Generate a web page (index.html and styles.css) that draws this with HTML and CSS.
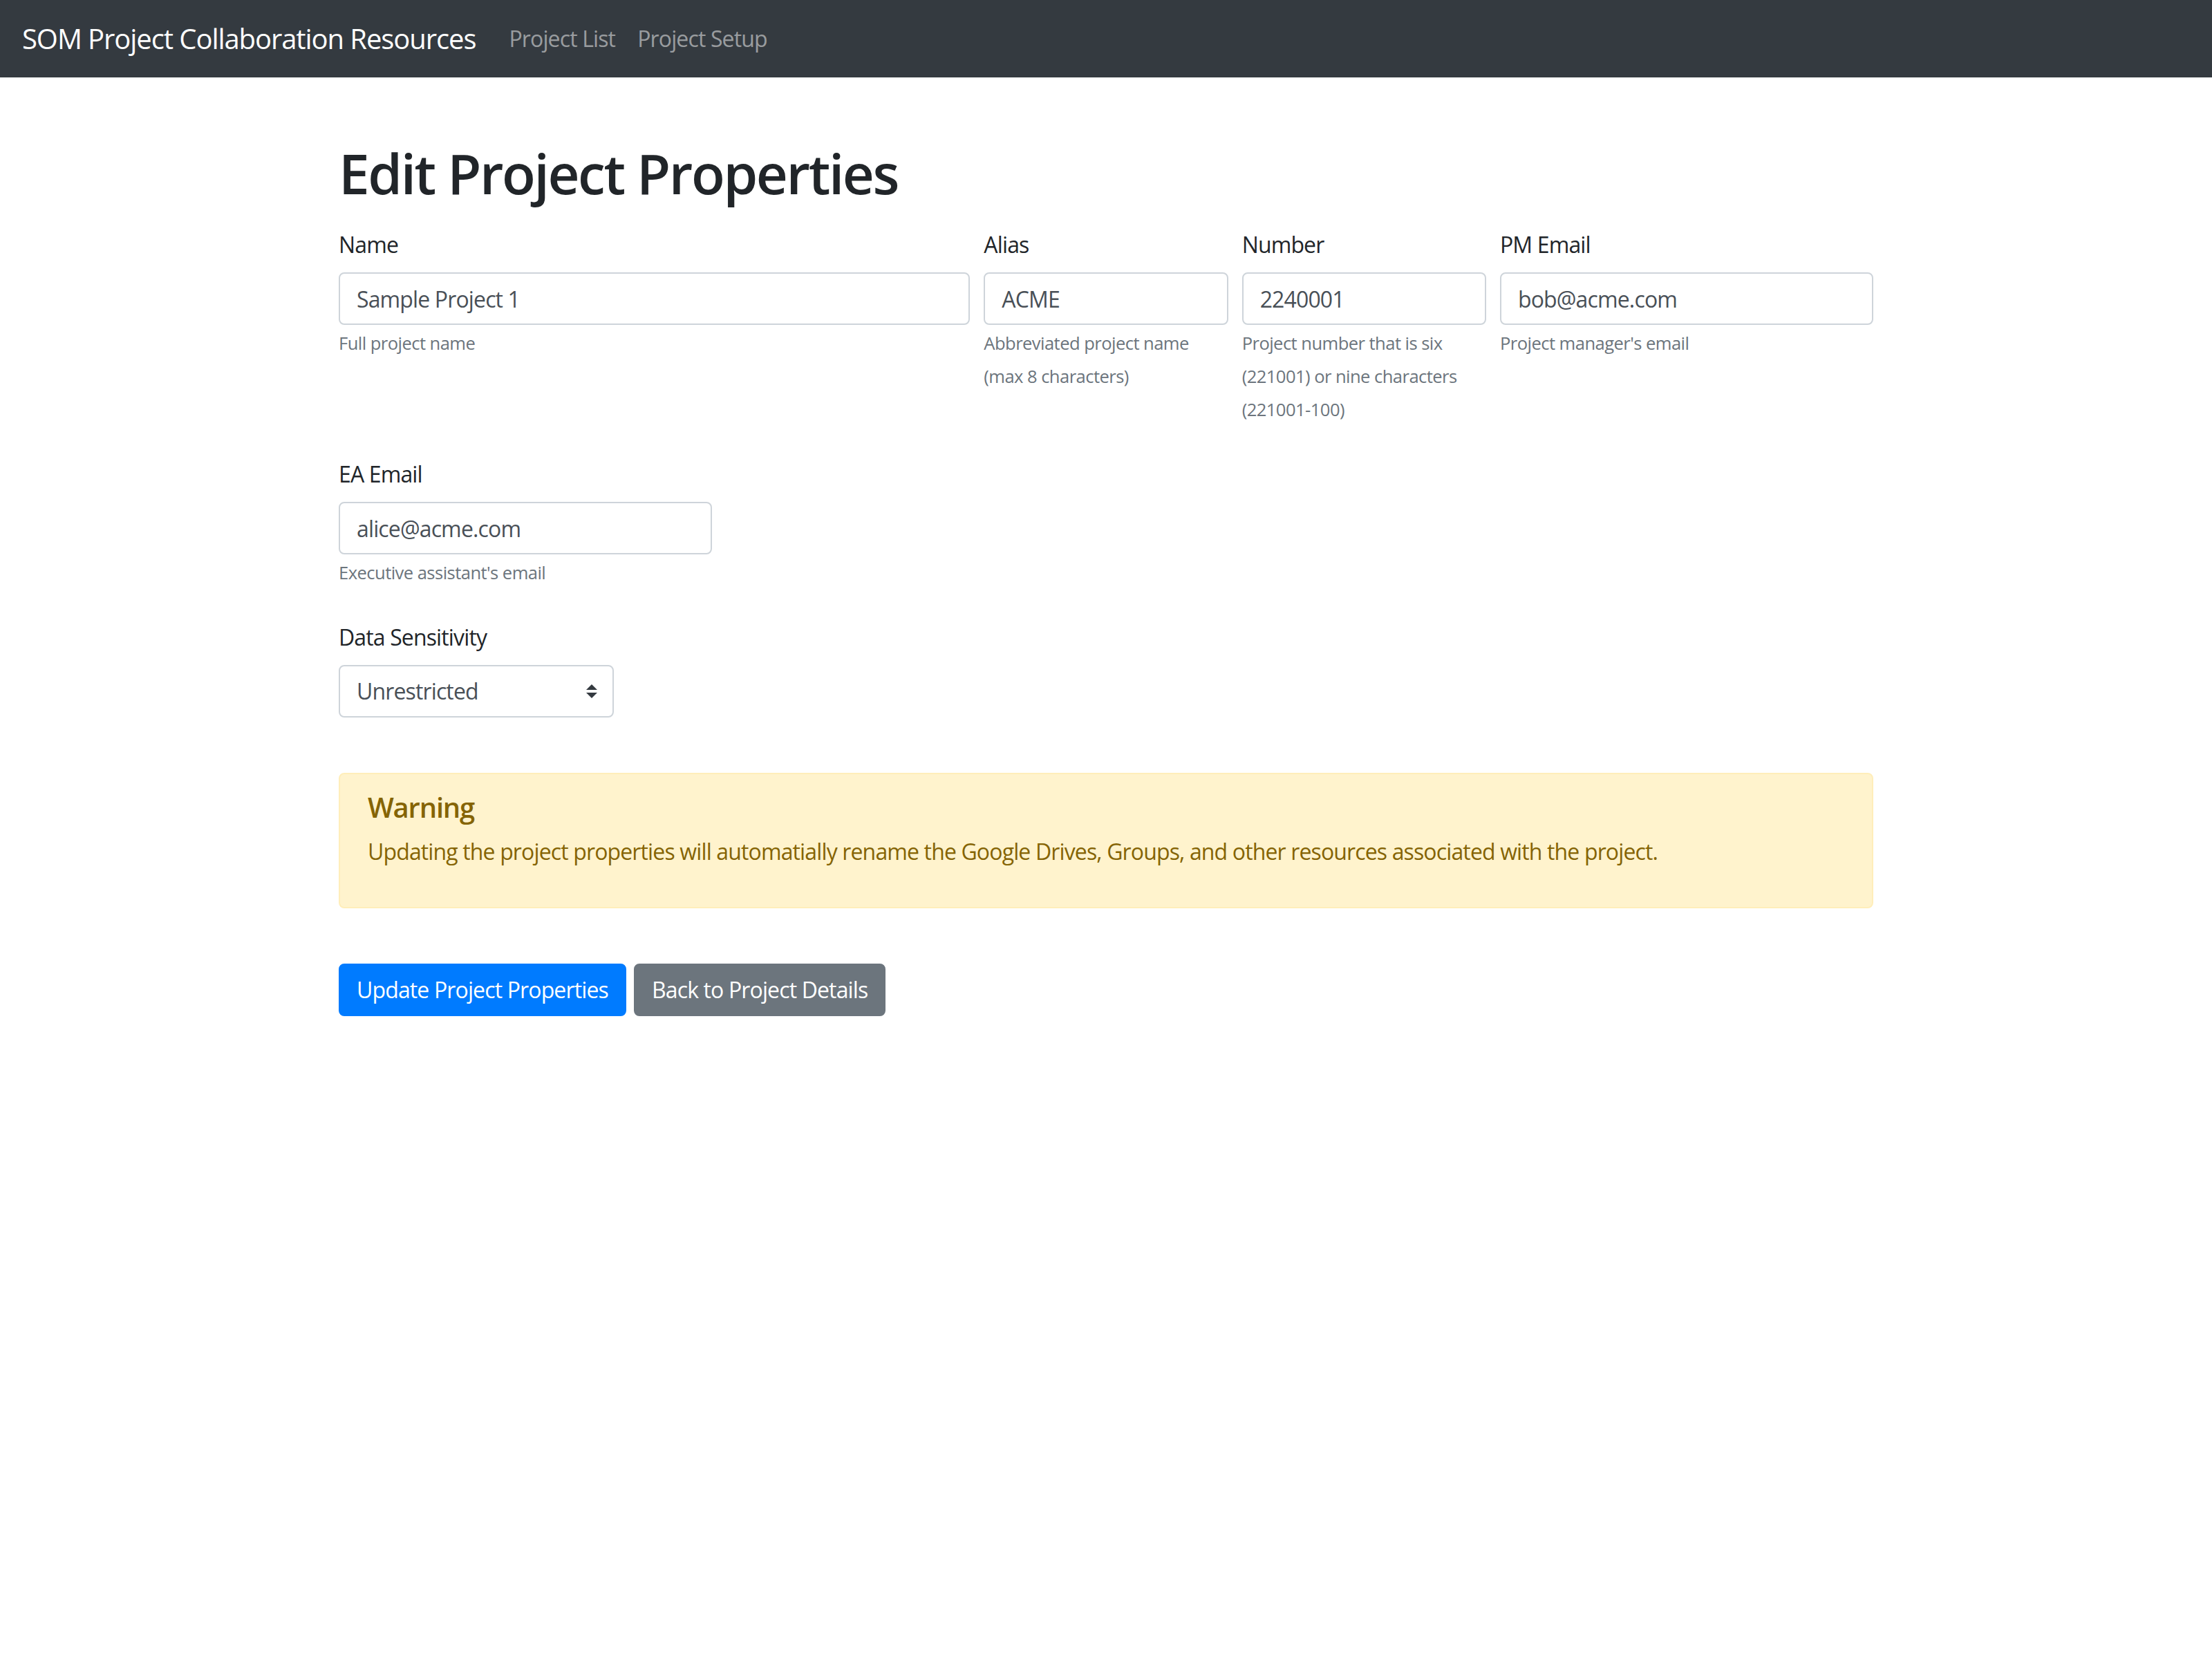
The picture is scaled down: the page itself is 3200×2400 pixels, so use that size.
FILE: index.html
```html
<!DOCTYPE html>
<html lang="en">
<head>
<meta charset="utf-8">
<title>Edit Project Properties</title>
<link rel="stylesheet" href="styles.css">
</head>
<body>
<nav class="navbar">
  <a class="brand" href="#">SOM Project Collaboration Resources</a>
  <div class="nav-links">
    <a class="nav-link" href="#">Project List</a>
    <a class="nav-link" href="#">Project Setup</a>
  </div>
</nav>
<main class="container">
  <h1 class="title">Edit Project Properties</h1>
  <form class="form">
    <div class="form-row">
      <div class="form-group col-5">
        <label class="label" for="name">Name</label>
        <input class="input" id="name" type="text" value="Sample Project 1">
        <div class="help"><small>Full project name</small></div>
      </div>
      <div class="form-group col-2">
        <label class="label" for="alias">Alias</label>
        <input class="input" id="alias" type="text" value="ACME">
        <div class="help"><small>Abbreviated project name <span class="nowrap">(max 8 characters)</span></small></div>
      </div>
      <div class="form-group col-2">
        <label class="label" for="number">Number</label>
        <input class="input" id="number" type="text" value="2240001">
        <div class="help"><small>Project number that is six (221001) or nine characters (221001-100)</small></div>
      </div>
      <div class="form-group col-3">
        <label class="label" for="pm">PM Email</label>
        <input class="input" id="pm" type="text" value="bob@acme.com">
        <div class="help"><small>Project manager's email</small></div>
      </div>
    </div>
    <div class="form-row">
      <div class="form-group col-3">
        <label class="label" for="ea">EA Email</label>
        <input class="input" id="ea" type="text" value="alice@acme.com">
        <div class="help"><small>Executive assistant's email</small></div>
      </div>
    </div>
    <div class="form-group">
      <label class="label" for="sens">Data Sensitivity</label>
      <div class="select-wrap">
        <select class="select" id="sens">
          <option selected>Unrestricted</option>
          <option>Restricted</option>
          <option>Highly Restricted</option>
        </select>
        <svg class="select-arrow" viewBox="0 0 4 5" width="16" height="20" aria-hidden="true"><path d="M2 0L0 2h4zm0 5L0 3h4z" fill="#343a40"/></svg>
      </div>
    </div>
    <div class="alert">
      <h5 class="alert-heading">Warning</h5>
      <p class="alert-text">Updating the project properties will automatially rename the Google Drives, Groups, and other resources associated with the project.</p>
    </div>
    <div class="actions">
      <button type="button" class="btn btn-primary">Update Project Properties</button>
      <button type="button" class="btn btn-secondary">Back to Project Details</button>
    </div>
  </form>
</main>
</body>
</html>
```

FILE: styles.css
```css
* { box-sizing: border-box; }

html, body {
  margin: 0;
  background: #fff;
}

body {
  font-family: "Open Sans", "Noto Sans", "Liberation Sans", sans-serif;
  font-size: 32px;
  line-height: 48px;
  letter-spacing: -0.027em;
  color: #212529;
}

.navbar {
  display: flex;
  align-items: center;
  background: #343a40;
  padding: 16px 32px;
}

.brand {
  font-size: 40px;
  line-height: 60px;
  padding: 10px 0;
  margin-right: 32px;
  color: #fff;
  letter-spacing: -0.027em;
  text-decoration: none;
  white-space: nowrap;
}

.nav-links {
  display: flex;
}

.nav-link {
  padding: 16px;
  font-size: 32px;
  line-height: 48px;
  color: rgba(255, 255, 255, 0.5);
  text-decoration: none;
}

.container {
  width: 2220px;
  margin: 0 auto;
}

.title {
  font-size: 80px;
  line-height: 96px;
  font-weight: 600;
  letter-spacing: -0.03em;
  margin: 90px 0 32px;
}

.form {
  display: flex;
  flex-direction: column;
}

.form-row {
  display: flex;
  margin: 0 -10px;
}

.form-row > .form-group {
  padding: 0 10px;
}

.col-5 { flex: 0 0 41.6667%; }
.col-2 { flex: 0 0 16.6667%; }
.col-3 { flex: 0 0 25%; }

.form-group {
  margin-bottom: 48px;
}

.label {
  display: block;
  margin-bottom: 16px;
}

.input,
.select {
  display: block;
  width: 100%;
  height: 76px;
  padding: 12px 24px;
  font-family: inherit;
  font-size: 32px;
  line-height: 48px;
  letter-spacing: -0.027em;
  color: #495057;
  background: #fff;
  border: 2px solid #ced4da;
  border-radius: 8px;
  outline: none;
}

.help {
  color: #6c757d;
}

.help small {
  font-size: 25.6px;
  line-height: 1;
  letter-spacing: -0.022em;
}

.nowrap {
  white-space: nowrap;
}

.select-wrap {
  position: relative;
  width: 398px;
}

.select {
  appearance: none;
  -webkit-appearance: none;
  padding-right: 56px;
}

.select-arrow {
  position: absolute;
  right: 24px;
  top: 28px;
  pointer-events: none;
}

.alert {
  margin: 32px 0 80px;
  padding: 24px 40px;
  background: #fff3cd;
  border: 2px solid #ffeeba;
  border-radius: 8px;
  color: #856404;
}

.alert-heading {
  margin: 0 0 16px;
  font-size: 40px;
  line-height: 48px;
  font-weight: 600;
  letter-spacing: -0.03em;
}

.alert-text {
  margin: 0 0 32px;
}

.actions {
  display: flex;
  gap: 11px;
}

.btn {
  font-family: inherit;
  font-size: 32px;
  line-height: 48px;
  letter-spacing: -0.027em;
  padding: 12px 24px;
  border: 2px solid transparent;
  border-radius: 8px;
  color: #fff;
  cursor: pointer;
}

.btn-primary {
  background: #007bff;
  border-color: #007bff;
}

.btn-secondary {
  background: #6c757d;
  border-color: #6c757d;
}
```
